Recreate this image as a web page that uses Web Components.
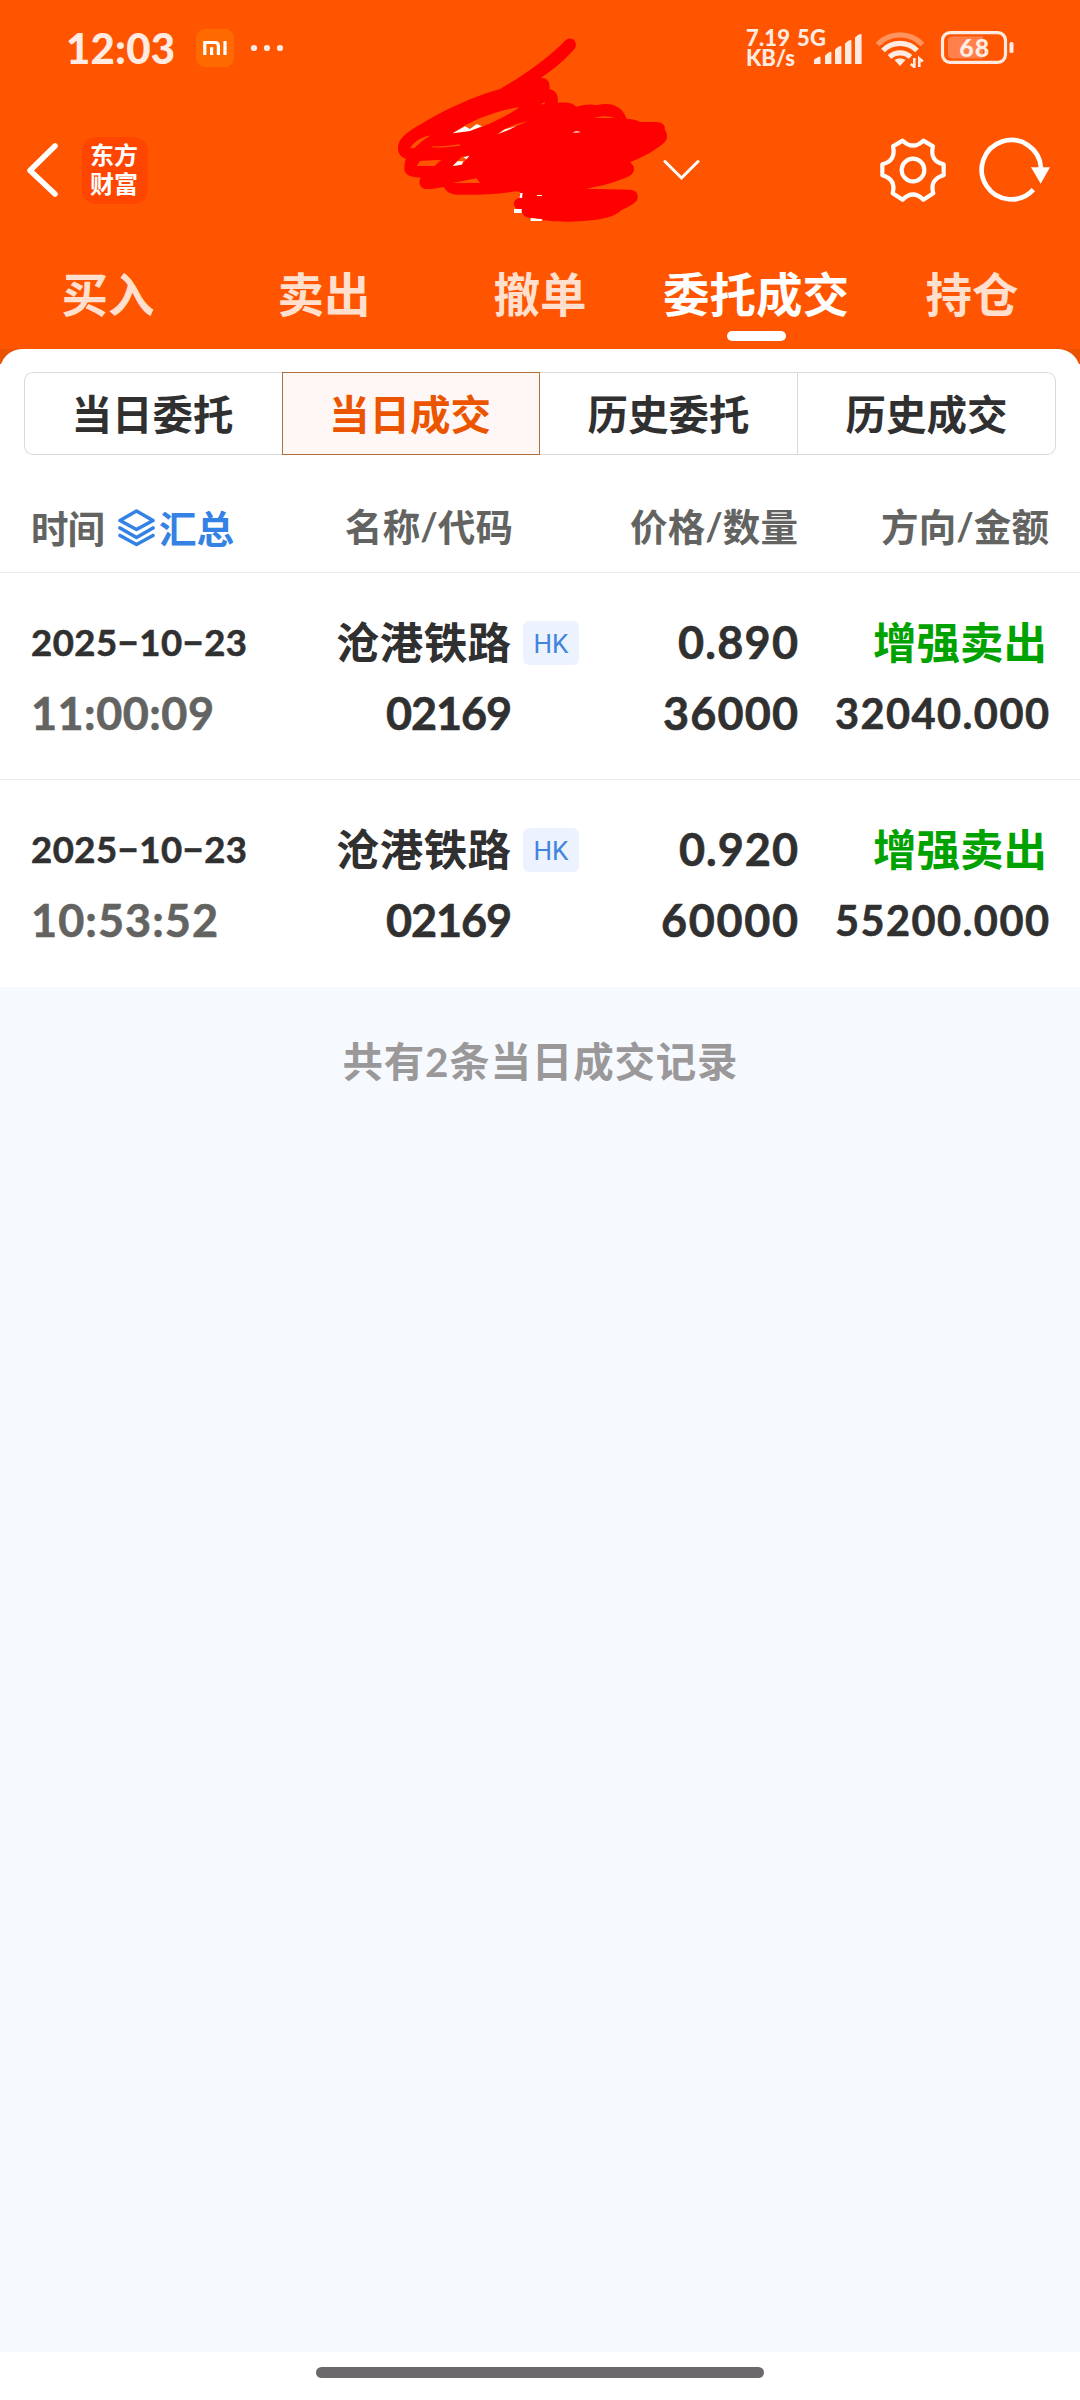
<!DOCTYPE html>
<html lang="zh-CN">
<head>
<meta charset="utf-8">
<title>当日成交</title>
<style>
html,body{margin:0;padding:0;background:#fff}
body{font-family:Lato,"Noto Sans CJK SC",sans-serif;font-weight:700;color:#303030}
</style>
</head>
<body>
<trade-app></trade-app>
<script>
function define(name, html, init) {
  const t = document.createElement('template');
  t.innerHTML = html;
  customElements.define(name, class extends HTMLElement {
    constructor() {
      super();
      this.attachShadow({ mode: 'open' }).appendChild(t.content.cloneNode(true));
    }
    connectedCallback() { if (init) init.call(this, this.shadowRoot); }
  });
}

/* Text tracked out or in so that its advance equals the w attribute */
define('fit-text', `<style>:host{display:inline-block;white-space:nowrap;line-height:inherit}</style><slot></slot>`, function () {
  const w = parseFloat(this.getAttribute('w'));
  if (!w) return;
  const n = [...this.textContent].length;
  const ls = (w - this.getBoundingClientRect().width) / (n - 1);
  this.style.letterSpacing = ls + 'px';
  this.style.marginRight = -ls + 'px';
});

define('status-bar', `<style>
:host{display:flex;height:96px;align-items:center;color:#ffebe2;padding:0 65px 0 66px;box-sizing:border-box}
svg{display:block;flex:none}
.time{font-size:42px;line-height:50px;font-weight:900}
.mi{margin-left:21px}.dots{margin-left:16px}
.right{display:flex;align-items:center;margin-left:auto}
.net{display:flex;flex-direction:column;align-items:flex-start;font-size:22px;line-height:20.500px;font-weight:900;width:51px}
.g5{font-size:22px;line-height:20px;font-weight:900;align-self:flex-start}
.cell{display:flex;height:40px;position:relative;width:67px}
.cell svg{position:absolute;left:0;top:0}
</style>
<fit-text class="time" w="109">12:03</fit-text>
<svg class="mi" width="38" height="38"><rect width="38" height="38" rx="9" fill="#ff6a00"/><path d="M8.800 26V13.500H19q3.400 0 3.400 3.400V26M15.600 18.200V26M29 12v14" fill="none" stroke="#fff" stroke-width="3.200"/></svg>
<svg class="dots" width="34" height="8" fill="currentColor"><circle cx="4" cy="4" r="3.100"/><circle cx="17" cy="4" r="3.100"/><circle cx="30" cy="4" r="3.100"/></svg>
<div class="right">
<div class="net"><fit-text w="44">7.19</fit-text><fit-text w="49">KB/s</fit-text></div>
<div class="cell"><fit-text class="g5" w="29">5G</fit-text>
<svg width="66" height="40" fill="currentColor"><path d="M17 36v-3.500q0-1.500 1.500-2l3.500-1.800q1.500-.5 1.500 1V36zM28 36V27.500l3-2.500q3.400-2.500 3.400 0V36zM38 36V21.500l3-2.500q3.400-2 3.400 0V36zM48 36V15.500l3-2.500q3.400-2 3.400 0V36zM58 36V9.500L61 7q3.600-2 3.600 0V36z"/></svg></div>
<svg width="56" height="40" viewBox="0 0 56 40" style="margin-left:8px" fill="none" stroke="currentColor" stroke-width="5.300"><path d="M5.500 16.500a31 31 0 0 1 45 0" opacity=".42"/><path d="M11 22.500a24 24 0 0 1 34 0"/><path d="M17.500 29a15.500 15.500 0 0 1 21 0"/><path d="M28 38l-5.500-6q5.500-3.500 11 0z" fill="currentColor" stroke="none"/><path d="M42.300 30v9l-3.500-3M47.300 39v-8.500l3.500 3" stroke-width="2.600"/></svg>
<svg width="76" height="34" viewBox="0 0 76 34" style="margin-left:11px"><rect x="3.500" y="1.700" width="63" height="29.600" rx="7.500" fill="none" stroke="currentColor" stroke-width="3.200"/><path d="M13 5.500h31v22H13q-4 0-4-4v-14q0-4 4-4z" fill="#ff804a"/><rect x="70.500" y="11" width="4" height="11" rx="1.500" fill="currentColor"/><text x="35.300" y="25.500" text-anchor="middle" font-size="25" font-weight="900" font-family="Lato" fill="currentColor" textLength="30">68</text></svg>
</div>`);

define('scribble-mark', `<style>:host{display:block;width:350px;height:220px}svg{display:block}</style>
<svg width="350" height="220" viewBox="0 0 1050 660">
<path fill="#f00" d="M84 385C84 350 120 330 200 285C270 248 330 225 390 207C470 160 540 110 585 62C605 45 625 65 615 85C590 115 550 150 512 174C530 172 542 185 538 207C556 210 567 225 563 248C590 246 610 248 618 260C650 252 665 252 680 256C720 246 755 255 770 296C790 298 800 300 812 306L860 306C880 308 886 318 884 328C895 345 893 360 878 372C850 395 820 410 780 427C795 437 797 455 780 467C740 485 700 497 648 506L780 509C805 510 810 535 795 547C780 560 765 565 755 570C730 595 680 602 600 605C550 606 510 600 490 594C465 594 455 585 456 571C430 570 425 545 440 537C447 537 448 530 451 516L440 514C380 522 320 526 260 524C235 522 225 510 222 501C200 505 180 508 165 507C148 503 145 485 152 473C120 472 103 465 103 445C103 430 106 420 108 416C92 412 84 400 84 385Z"/>
<g fill="#ff5500"><path d="M120 384Q140 354 182 346Q155 362 132 385z"/><path d="M248 340C300 300 390 270 448 261C420 283 375 305 335 321Q290 336 248 340z"/><path d="M376 345Q415 315 475 303Q430 322 376 345z"/><path d="M185 379Q230 380 270 373V377Q220 384 185 382z"/><path d="M150 423L214 419L194 438H140z"/><path d="M248 438L275 410L298 407L275 434z"/><path d="M248 489L320 475L330 489z"/><path d="M670 294Q705 283 735 294z"/><path d="M512 253L526 245L522 253z"/></g>
<g fill="#fff"><path d="M248 340L285 319L300 327L320 312L336 319L300 333z"/><path d="M385 342L405 328L440 318L415 330z"/><path d="M248 438L262 424L280 424L275 434zM280 412L298 407L290 418z"/><path d="M608 338Q620 330 632 337z"/><path d="M451 519h7l-2 15h-8z"/><path d="M432 567h23v12h-23zM482 594l36 4-4 5h-32z"/><path d="M500 525h16v3h-14z"/></g>
</svg>`);

define('nav-bar', `<style>
:host{display:flex;height:148px;align-items:center;padding:0 29.500px 0 26px;box-sizing:border-box;position:relative;color:#fff}
svg{display:block;flex:none}
.logo{width:66px;height:67px;border-radius:14px;background:#ff4600;margin-left:24px;display:flex;flex-direction:column;align-items:center;justify-content:center;font-size:24px;line-height:29px;padding:0 2px 2px 0;box-sizing:border-box}
.actions{display:flex;align-items:center;margin-left:auto;gap:32px}
.drop{margin-left:513.500px}
scribble-mark{position:absolute;left:370px;top:-76px}
</style>
<svg width="32" height="56" fill="none" stroke="#fff" stroke-width="5.500" stroke-linecap="round" stroke-linejoin="round"><path d="M29 4L4 28.500L29 52" /></svg>
<div class="logo"><span>东方</span><span>财富</span></div>
<svg class="drop" width="38" height="22" fill="none" stroke="#fff" stroke-width="3" stroke-linecap="round"><path d="M3 2.500L19.500 19L36 2.500"/></svg>
<div class="actions">
<svg width="68" height="66" viewBox="477 409 204 198" fill="none" stroke="#fff" stroke-width="12.500" stroke-linejoin="round"><path d="M519 437L548 420Q579 449 610 420L639 437Q628 481 671 491V524Q628 536 640 578L610 597Q579 566 548 597L518 578Q529 536 487 524V491Q529 481 519 437z"/><circle cx="579" cy="508" r="34"/></svg>
<svg width="72" height="68" viewBox="777 409 216 204"><path d="M940 570A89 89 0 1 1 963 505" fill="none" stroke="#fff" stroke-width="14"/><path d="M933 503H990L962 552z" fill="#fff"/></svg>
</div>
<scribble-mark></scribble-mark>`);

define('main-tab', `<style>
:host{display:flex;flex-direction:column;align-items:center;width:216px;color:#ffdfcd;font-size:46.500px;line-height:60px;padding-top:20px;box-sizing:border-box}
:host([active]){color:#fff}
i{display:none;width:59px;height:9.500px;border-radius:5px;background:#fff;margin-top:7px}
:host([active]) i{display:block}
</style><span><slot></slot></span><i></i>`);

define('main-tabs', `<style>:host{display:flex;height:105px}</style>
<main-tab>买入</main-tab><main-tab>卖出</main-tab><main-tab>撤单</main-tab><main-tab active>委托成交</main-tab><main-tab>持仓</main-tab>`);

define('seg-item', `<style>
:host{display:flex;flex:0 0 258px;align-items:center;justify-content:center;font-size:40.500px;line-height:60px;border:1px solid #d8d9de;border-left-width:0;box-sizing:border-box;height:83px;color:#303030;padding-top:2px}
:host(:first-child){border-left-width:1px;border-radius:9px 0 0 9px;border-right-width:0;padding-right:2px}
:host(:last-child){border-radius:0 9px 9px 0}
:host([active]){border:1.500px solid #b0703c;background:#fff7f6;color:#eb5500;padding-right:2px}
</style><slot></slot>`);

define('seg-control', `<style>:host{display:flex;padding:23px 24px 0}</style><slot></slot>`);

const GRID = 'display:grid;grid-template-columns:220px 260px 68px 219px 251px;padding-left:31px;';

define('list-head', `<style>
:host{${GRID}height:118px;padding-top:48px;box-sizing:border-box;border-bottom:1.500px solid #ececec;font-size:37.500px;line-height:48px;color:#636462}
.r{text-align:right}.n{margin-right:-2px}.t{display:flex;align-items:center;height:51px}
svg{margin:-2px 4px 0 13px}.b{color:#3482e4}
</style>
<div class="t"><fit-text w="74">时间</fit-text><svg width="37" height="38" viewBox="0 0 37 38" fill="none" stroke="#3482e4" stroke-width="3.600" stroke-linejoin="round" stroke-linecap="round"><path d="M18.500 2L35 11.500L18.500 20.500L2 11.500zM2 19L18.500 28.500L35 19M2 26.500L18.500 35.500L35 26.500"/></svg><fit-text class="b" w="75">汇总</fit-text></div>
<div class="r n"><fit-text w="168">名称/代码</fit-text></div><div></div>
<div class="r"><fit-text w="168">价格/数量</fit-text></div>
<div class="r"><fit-text w="168">方向/金额</fit-text></div>`);

define('trade-row', `<style>
:host{${GRID}height:207px;padding-top:33.500px;box-sizing:border-box;font-size:45px;grid-template-rows:70px 72px;line-height:70px}
:host([line]){border-bottom:1.500px solid #ececec}
.r{text-align:right}.date{font-size:36.500px}.time{color:#636462}.amt{font-size:41.500px}
.d{-webkit-text-stroke:.6px currentColor}
.name,.side{font-size:43.500px}.side{color:#00a200;padding-right:2px}
.hk{align-self:center;justify-self:end;width:56px;height:44px;margin-top:2px;border-radius:6px;background:#edf2ff;color:#4285dc;font:400 26px/46px Roboto,sans-serif;text-align:center}
.l2{line-height:72px}
.code{margin-right:-1px}
</style>
<div class="d date"><slot name="date"></slot></div><div class="r name"><slot name="name"></slot></div><div class="hk"><slot name="market"></slot></div><div class="r d"><slot name="price"></slot></div><div class="r side"><slot name="side"></slot></div>
<div class="d l2 time"><slot name="time"></slot></div><div class="r d l2 code"><slot name="code"></slot></div><div></div><div class="r d l2"><slot name="qty"></slot></div><div class="r d l2 amt"><slot name="amt"></slot></div>`);

define('trade-app', `<style>
:host{display:flex;flex-direction:column;width:1080px;height:2400px;background:#f6faff}
header{background:#ff5500;height:349px}
.wrap{background:linear-gradient(#ea5200 15px,#fff 15px)}
.panel{background:#fff;border-radius:22px 22px 0 0}
.foot{flex:1;text-align:center;font-size:40.500px;line-height:60px;color:#9b989a;padding-top:45px}
.home{height:48px;background:#fff;display:flex;justify-content:center;padding-top:15px;box-sizing:border-box}
.home i{width:448px;height:11px;border-radius:6px;background:#6b696c}
</style>
<header><status-bar></status-bar><nav-bar></nav-bar><main-tabs></main-tabs></header>
<div class="wrap"><div class="panel">
<seg-control><seg-item>当日委托</seg-item><seg-item active>当日成交</seg-item><seg-item>历史委托</seg-item><seg-item>历史成交</seg-item></seg-control>
<list-head></list-head>
<trade-row line><fit-text slot="date" w="216">2025−10−23</fit-text><fit-text slot="name" w="175">沧港铁路</fit-text><span slot="market">HK</span><fit-text slot="price" w="120">0.890</fit-text><span slot="side">增强卖出</span><fit-text slot="time" w="183">11:00:09</fit-text><fit-text slot="code" w="126">02169</fit-text><fit-text slot="qty" w="135">36000</fit-text><fit-text slot="amt" w="214">32040.000</fit-text></trade-row>
<trade-row><fit-text slot="date" w="216">2025−10−23</fit-text><fit-text slot="name" w="175">沧港铁路</fit-text><span slot="market">HK</span><fit-text slot="price" w="119">0.920</fit-text><span slot="side">增强卖出</span><fit-text slot="time" w="187">10:53:52</fit-text><fit-text slot="code" w="126">02169</fit-text><fit-text slot="qty" w="137">60000</fit-text><fit-text slot="amt" w="214">55200.000</fit-text></trade-row>
</div></div>
<div class="foot"><fit-text w="395">共有2条当日成交记录</fit-text></div>
<div class="home"><i></i></div>`);
</script>
</body>
</html>
